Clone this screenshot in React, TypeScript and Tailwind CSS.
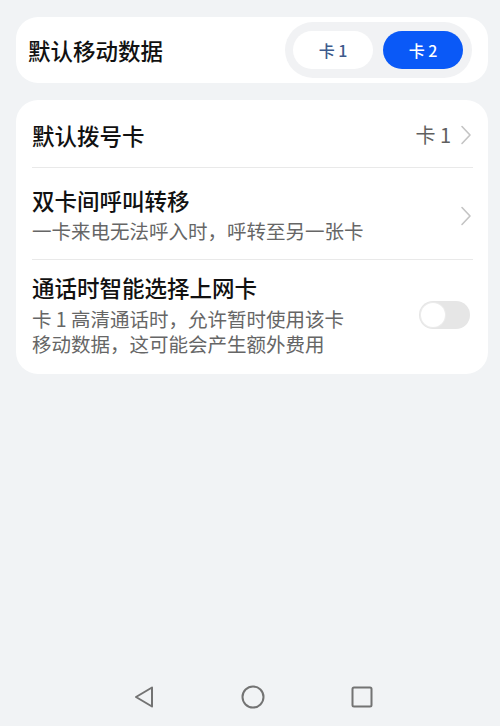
import { useState } from "react";

const font = {
    fontFamily: '"Noto Sans CJK SC", "Noto Sans", sans-serif',
};

function Chevron() {
    return (
        <svg width="12" height="20" viewBox="0 0 12 20" fill="none">
            <path
                d="M2 1.5L10 10L2 18.5"
                stroke="#c4c4c4"
                strokeWidth="1.6"
                strokeLinecap="round"
                strokeLinejoin="round"
            />
        </svg>
    );
}

function Toggle({ on, onChange }: { on: boolean; onChange: () => void }) {
    return (
        <button
            onClick={onChange}
            className={`w-[51px] h-[28px] rounded-full p-[2px] flex items-center ${
                on ? "bg-[#0a59f7] justify-end" : "bg-[#e6e6e6] justify-start"
            }`}
        >
            <span className="w-[24px] h-[24px] rounded-full bg-white shadow-[0_0_0_1px_#ececec]" />
        </button>
    );
}

export default function App() {
    const [card, setCard] = useState<1 | 2>(2);
    const [smart, setSmart] = useState<boolean>(false);

    return (
        <div
            className="h-screen w-full bg-[#f1f3f5] flex flex-col"
            style={font}
        >
            <div className="pl-4 pr-3 pt-[17px] flex flex-col gap-[17px]">
                <div className="bg-white rounded-[22px] h-[66px] pl-3 pr-4 flex items-center justify-between">
                    <span className="text-[22.5px] font-medium text-[#111] pt-[1px]">
                        默认移动数据
                    </span>
                    <div className="bg-[#f1f2f4] rounded-full h-[56px] w-[187px] px-2 flex items-center gap-[10px]">
                        <button
                            onClick={() => setCard(1)}
                            className={`w-[80px] h-[38px] rounded-full text-[16px] font-medium ${
                                card === 1
                                    ? "bg-[#0a59f7] text-white"
                                    : "bg-white text-[#3d5a8c]"
                            }`}
                        >
                            卡 1
                        </button>
                        <button
                            onClick={() => setCard(2)}
                            className={`w-[80px] h-[38px] rounded-full text-[16px] font-medium ${
                                card === 2
                                    ? "bg-[#0a59f7] text-white"
                                    : "bg-white text-[#3d5a8c]"
                            }`}
                        >
                            卡 2
                        </button>
                    </div>
                </div>

                <div className="bg-white rounded-[22px] pl-4 pr-[15px]">
                    <div className="h-[68px] flex items-center justify-between border-b border-[#e9e9e9]">
                        <span className="text-[22.5px] font-medium text-[#111] pt-[5px]">
                            默认拨号卡
                        </span>
                        <div className="flex items-center gap-[9px] pr-[1px] pt-[3px]">
                            <span className="text-[20px] text-[#5f5f5f]">
                                卡 1
                            </span>
                            <Chevron />
                        </div>
                    </div>

                    <div className="h-[92px] flex items-center justify-between border-b border-[#e9e9e9]">
                        <div className="flex flex-col pt-[4px]">
                            <span className="text-[22.5px] font-medium text-[#111] leading-[31px]">
                                双卡间呼叫转移
                            </span>
                            <span className="text-[19.5px] text-[#666] leading-[30px]">
                                一卡来电无法呼入时，呼转至另一张卡
                            </span>
                        </div>
                        <div className="pr-[1px] pt-[4px]">
                            <Chevron />
                        </div>
                    </div>

                    <div className="h-[114px] flex items-center justify-between pb-[6px]">
                        <div className="flex flex-col max-w-[325px]">
                            <span className="text-[22.5px] font-medium text-[#111] leading-[31px]">
                                通话时智能选择上网卡
                            </span>
                            <span className="text-[19.5px] text-[#666] leading-[25px] pt-[3px]">
                                卡 1 高清通话时，允许暂时使用该卡移动数据，这可能会产生额外费用
                            </span>
                        </div>
                        <div className="pt-[2px] mr-[3px]">
                            <Toggle on={smart} onChange={() => setSmart(!smart)} />
                        </div>
                    </div>
                </div>
            </div>

            <div className="flex-1" />

            <div className="h-[58px] flex items-center justify-center gap-[86px] pl-[6px] pb-[1px]">
                <svg width="22" height="24" viewBox="0 0 22 24" fill="none">
                    <path
                        d="M19 2.5L3 12L19 21.5Z"
                        stroke="#737373"
                        strokeWidth="2"
                        strokeLinejoin="round"
                    />
                </svg>
                <svg width="24" height="24" viewBox="0 0 24 24" fill="none">
                    <circle cx="12" cy="12" r="10.5" stroke="#737373" strokeWidth="2" />
                </svg>
                <svg width="22" height="22" viewBox="0 0 22 22" fill="none">
                    <rect
                        x="1.5"
                        y="1.5"
                        width="19"
                        height="19"
                        rx="1.5"
                        stroke="#737373"
                        strokeWidth="2"
                    />
                </svg>
            </div>
        </div>
    );
}
